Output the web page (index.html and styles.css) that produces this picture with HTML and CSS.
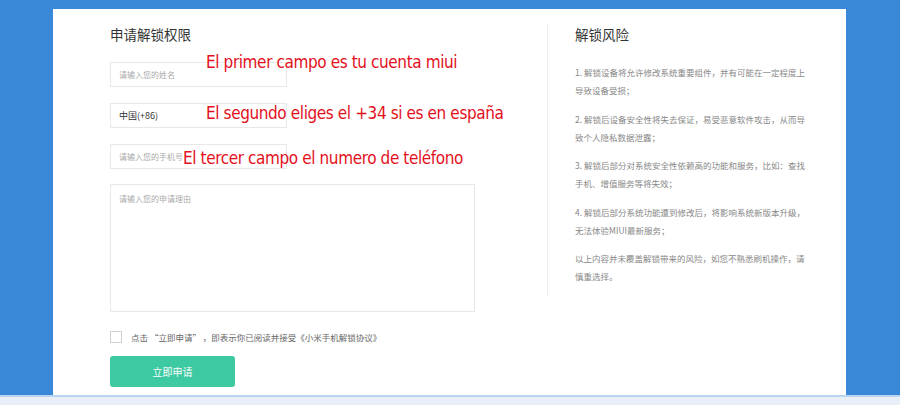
FILE: index.html
```html
<!DOCTYPE html>
<html lang="zh-CN">
<head>
<meta charset="utf-8">
<title>申请解锁权限</title>
<link rel="stylesheet" href="styles.css">
</head>
<body>
<div class="page">
  <div class="card">
    <section class="apply">
      <h2 class="title">申请解锁权限</h2>
      <input class="field" type="text" placeholder="请输入您的姓名">
      <div class="field select">中国(+86)</div>
      <input class="field" type="text" placeholder="请输入您的手机号">
      <textarea class="reason" placeholder="请输入您的申请理由"></textarea>
      <label class="agree"><span class="box"></span><span>点击 “立即申请” ，即表示你已阅读并接受《小米手机解锁协议》</span></label>
      <button class="submit" type="button">立即申请</button>
    </section>
    <section class="risk">
      <h2 class="title">解锁风险</h2>
      <p>1. 解锁设备将允许修改系统重要组件，并有可能在一定程度上导致设备受损；</p>
      <p>2. 解锁后设备安全性将失去保证，易受恶意软件攻击，从而导致个人隐私数据泄露；</p>
      <p>3. 解锁后部分对系统安全性依赖高的功能和服务，比如：查找手机、增值服务等将失效；</p>
      <p>4. 解锁后部分系统功能遭到修改后，将影响系统新版本升级，无法体验MIUI最新服务；</p>
      <p>以上内容并未覆盖解锁带来的风险，如您不熟悉刷机操作，请慎重选择。</p>
    </section>
    <div class="note note1">El primer campo es tu cuenta miui</div>
    <div class="note note2">El segundo eliges el +34 si es en españa</div>
    <div class="note note3">El tercer campo el numero de teléfono</div>
  </div>
  <div class="strip"></div>
</div>
</body>
</html>
```
FILE: styles.css
```css
* { box-sizing: border-box; }
html, body { margin: 0; padding: 0; }
body {
  width: 900px;
  height: 405px;
  overflow: hidden;
  background: #3a88d8;
  font-family: "Noto Sans CJK SC", "Noto Sans", sans-serif;
}
.page {
  display: flex;
  flex-direction: column;
  height: 405px;
  padding-top: 9px;
}
.card {
  position: relative;
  margin-left: 53px;
  width: 793px;
  height: 386px;
  background: #fff;
  display: flex;
  align-items: flex-start;
}
.title {
  margin: 0;
  font-size: 13.5px;
  line-height: 20px;
  font-weight: normal;
  color: #333;
}
.apply {
  width: 494px;
  padding: 15px 0 0 57px;
  display: flex;
  flex-direction: column;
  align-items: flex-start;
}
.apply .title { margin-bottom: 18px; }
.field {
  width: 177px;
  height: 25px;
  margin: 0 0 16px;
  padding: 0 8px;
  border: 1px solid #e8e8e8;
  border-radius: 0;
  font-family: inherit;
  font-size: 8px;
  color: #333;
  outline: none;
  background: #fff;
}
.field::placeholder, .reason::placeholder { color: #aaa; }
.select {
  display: flex;
  align-items: center;
  font-size: 9px;
  color: #333;
}
.reason {
  width: 365px;
  height: 128px;
  margin: -1px 0 0;
  padding: 8px 8px;
  border: 1px solid #e8e8e8;
  resize: none;
  font-family: inherit;
  font-size: 8px;
  line-height: 12px;
  outline: none;
}
.agree {
  display: flex;
  align-items: center;
  gap: 9px;
  margin-top: 19px;
  font-size: 8.5px;
  line-height: 12px;
  color: #666;
}
.box {
  width: 12px;
  height: 12px;
  border: 1px solid #d0d0d0;
  background: #fff;
}
.submit {
  margin-top: 13px;
  width: 125px;
  height: 31px;
  border: none;
  border-radius: 3px;
  background: #3dc9a2;
  color: #fff;
  font-family: inherit;
  font-size: 10px;
  padding: 0;
}
.risk {
  margin-top: 15px;
  width: 271px;
  height: 272px;
  border-left: 1px solid #eeeeee;
  padding-left: 27px;
}
.risk .title { margin-bottom: 19px; }
.risk p {
  margin: 0 0 10.5px;
  width: 236px;
  font-size: 8.5px;
  line-height: 18px;
  color: #888;
}
.note {
  position: absolute;
  font-family: "DejaVu Sans Condensed", "DejaVu Sans", sans-serif;
  font-stretch: condensed;
  font-size: 17px;
  letter-spacing: -0.4px;
  line-height: 20px;
  color: #e3101c;
  white-space: nowrap;
}
.note1 { left: 153px; top: 43px; }
.note2 { left: 153px; top: 94px; }
.note3 { left: 130px; top: 139px; }
.strip {
  height: 10px;
  border-top: 2px solid #b9d5f1;
  background: #e9eff6;
}
```
